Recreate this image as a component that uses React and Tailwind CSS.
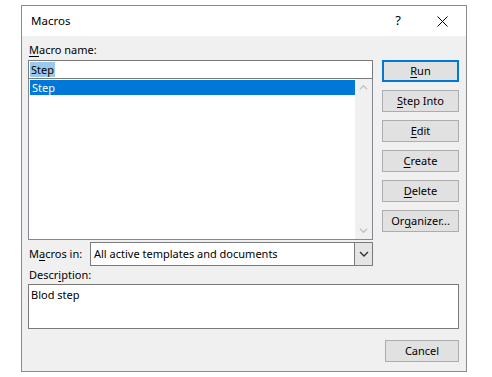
const font = { fontFamily: '"Noto Sans", "Segoe UI", sans-serif' };

const U = ({ children }) => <span className="underline underline-offset-2">{children}</span>;

const Btn = ({ children, primary }) => (
  <div
    className={`flex h-[22px] w-[77px] items-center justify-center bg-[#e1e1e1] text-[11px] text-black ${
      primary ? 'border-2 border-[#0078d7]' : 'border border-[#adadad]'
    }`}
  >
    {children}
  </div>
);

const Chevron = ({ up, color = '#c2c2c2', size = 9 }) => (
  <svg width={size} height={size} viewBox="0 0 10 10">
    <path d={up ? 'M1 7 L5 3 L9 7' : 'M1 3 L5 7 L9 3'} fill="none" stroke={color} strokeWidth="1.4" />
  </svg>
);

export default function App() {
  return (
    <div className="h-[377px] w-[492px] bg-white pt-[5px]" style={font}>
      <div className="ml-[21px] flex h-[367px] w-[446px] flex-col border border-[#8a8a8a]">
        <div className="flex h-[30px] items-center bg-white text-[11.5px] text-black">
          <span className="ml-[9px]">Macros</span>
          <span className="ml-auto mr-[36px] text-[13px]">?</span>
          <svg className="mr-[18px]" width="11" height="11" viewBox="0 0 11 11">
            <path d="M0.5 0.5 L10.5 10.5 M10.5 0.5 L0.5 10.5" stroke="#000" strokeWidth="1" />
          </svg>
        </div>

        <div className="flex flex-1 flex-col bg-[#f0f0f0] pl-[6px] text-[11px] text-black">
          <div className="ml-[1px] mt-[5px] h-[18px] leading-[18px]">
            <U>M</U>acro name:
          </div>

          <div className="mt-[1px] flex">
            <div className="flex w-[345px] flex-col">
              <div className="flex h-[19px] items-center border border-[#7a7a7a] bg-white px-[1px]">
                <span className="bg-[#99c9ef] px-[1px] leading-[15px]">Step</span>
              </div>
              <div className="flex h-[161px] border border-t-0 border-[#828790] bg-white">
                <div className="flex-1 pl-[1px] pt-[1px]">
                  <div className="h-[15px] bg-[#0078d7] pl-[2px] leading-[15px] text-white">Step</div>
                </div>
                <div className="flex w-[17px] flex-col items-center justify-between bg-[#f0f0f0] py-[4px]">
                  <Chevron up />
                  <Chevron />
                </div>
              </div>
            </div>

            <div className="ml-[9px] flex flex-col gap-[8px]">
              <Btn primary>
                <U>R</U>un
              </Btn>
              <Btn>
                <U>S</U>tep Into
              </Btn>
              <Btn>
                <U>E</U>dit
              </Btn>
              <Btn>
                <U>C</U>reate
              </Btn>
              <Btn>
                <U>D</U>elete
              </Btn>
              <Btn>
                Or<U>g</U>anizer...
              </Btn>
            </div>
          </div>

          <div className="mt-[2px] flex items-center">
            <span className="ml-[1px] w-[61px]">
              M<U>a</U>cros in:
            </span>
            <div className="flex h-[24px] w-[283px] items-center border border-[#7a7a7a] bg-white">
              <span className="ml-[3px] flex-1">All active templates and documents</span>
              <div className="flex h-full w-[18px] items-center justify-center border-l border-[#7a7a7a] bg-[#e5e5e5]">
                <Chevron color="#333" size={10} />
              </div>
            </div>
          </div>

          <div className="ml-[1px] h-[18px] leading-[18px]">
            Descr<U>i</U>ption:
          </div>
          <div className="h-[45px] w-[431px] border border-[#7a7a7a] bg-white px-[2px] pt-[2px] leading-[15px]">
            Blod step
          </div>

          <div className="mr-[7px] mt-[11px] flex justify-end">
            <div className="flex h-[22px] w-[74px] items-center justify-center border border-[#adadad] bg-[#e1e1e1]">
              Cancel
            </div>
          </div>
        </div>
      </div>
    </div>
  );
}
